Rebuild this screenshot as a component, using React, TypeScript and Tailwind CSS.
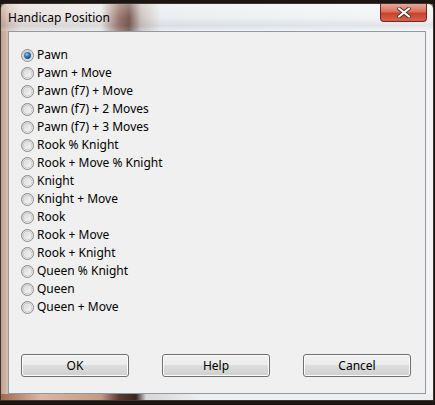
import React, { useState } from "react";

const options = [
  "Pawn",
  "Pawn + Move",
  "Pawn (f7) + Move",
  "Pawn (f7) + 2 Moves",
  "Pawn (f7) + 3 Moves",
  "Rook % Knight",
  "Rook + Move % Knight",
  "Knight",
  "Knight + Move",
  "Rook",
  "Rook + Move",
  "Rook + Knight",
  "Queen % Knight",
  "Queen",
  "Queen + Move",
];

function Radio({ checked }: { checked: boolean }) {
  return (
    <svg width="13" height="13" viewBox="0 0 13 13" className="shrink-0">
      <defs>
        <linearGradient id="rb" x1="0" y1="0" x2="1" y2="1">
          <stop offset="0" stopColor="#d4d4d4" />
          <stop offset="1" stopColor="#fbfbfb" />
        </linearGradient>
        <radialGradient id="dot" cx="0.4" cy="0.35" r="0.7">
          <stop offset="0" stopColor="#8ed0f7" />
          <stop offset="0.5" stopColor="#2a74b8" />
          <stop offset="1" stopColor="#123f73" />
        </radialGradient>
      </defs>
      <circle cx="6.5" cy="6.5" r="6" fill="url(#rb)" stroke="#8a8a8a" strokeWidth="1" />
      <circle cx="6.5" cy="6.5" r="4.5" fill="none" stroke="#c9c9c9" strokeWidth="1" />
      {checked && <circle cx="6.5" cy="6.5" r="3.4" fill="url(#dot)" />}
    </svg>
  );
}

function Btn({ label }: { label: string }) {
  return (
    <button className="w-[108px] h-[23px] rounded-[3px] border border-[#707070] bg-[linear-gradient(#f2f2f2_0%,#ebebeb_45%,#dddddd_50%,#cfcfcf_100%)] shadow-[inset_0_0_0_1px_#fcfcfc] text-[12px] text-black leading-none">
      {label}
    </button>
  );
}

export default function App() {
  const [sel, setSel] = useState(0);
  return (
    <div
      className="w-[435px] h-[405px] bg-[#1c1512] pt-[3px] overflow-hidden"
      style={{ fontFamily: '"Noto Sans", "Open Sans", sans-serif' }}
    >
      <div className="w-[434px] h-[398px] rounded-t-[6px] border border-[#3a3432] bg-[linear-gradient(90deg,#c29f8e_0px,#d9c3b8_8px,#e5dedb_20px,#e9e7e6_100px,#8f6a5f_118px,#6a4a40_128px,#c9bdb8_140px,#e9ebee_160px,#eef0f2_300px,#f4f4f5_434px)] flex flex-col">
        <div className="h-[27px] flex items-start justify-between bg-[linear-gradient(180deg,rgba(255,255,255,0.35)_0%,rgba(255,255,255,0.1)_50%,rgba(150,160,175,0.18)_80%,rgba(255,255,255,0.2)_100%)]">
          <div className="pl-[7px] pt-[5px] text-[12px] text-black">Handicap Position</div>
          <div className="mr-[6px] w-[47px] h-[18px] rounded-b-[4px] border border-t-0 border-[#6b2a20] bg-[linear-gradient(#e8a899_0%,#d9705d_45%,#c7432c_55%,#d8614a_100%)] flex items-center justify-center">
            <svg width="14" height="11" viewBox="0 0 14 11">
              <path d="M2 1.5 L12 9.5 M12 1.5 L2 9.5" stroke="#3a2a2a" strokeWidth="3.6" strokeLinecap="round" />
              <path d="M2 1.5 L12 9.5 M12 1.5 L2 9.5" stroke="#ffffff" strokeWidth="2.2" strokeLinecap="round" />
            </svg>
          </div>
        </div>
        <div className="mx-[7px] h-[363px] border border-[#8f9aa6] bg-[#f0f0f0] flex flex-col">
          <div className="pt-[14px] pl-[12px] flex flex-col">
            {options.map((o, i) => (
              <label
                key={o}
                className="h-[18px] flex items-center gap-[3px] text-[12px] text-black cursor-default"
                onClick={() => setSel(i)}
              >
                <Radio checked={sel === i} />
                <span>{o}</span>
              </label>
            ))}
          </div>
          <div className="mt-[38px] pl-[12px] flex gap-[33px]">
            <Btn label="OK" />
            <Btn label="Help" />
            <Btn label="Cancel" />
          </div>
        </div>
        <div className="flex-1 bg-[linear-gradient(90deg,#a06a52_0px,#d9b8a5_40px,#c49a86_100px,#5a3a30_118px,#3a2520_135px,#d8d6d6_145px,#eceeef_200px)]" />
      </div>
    </div>
  );
}
